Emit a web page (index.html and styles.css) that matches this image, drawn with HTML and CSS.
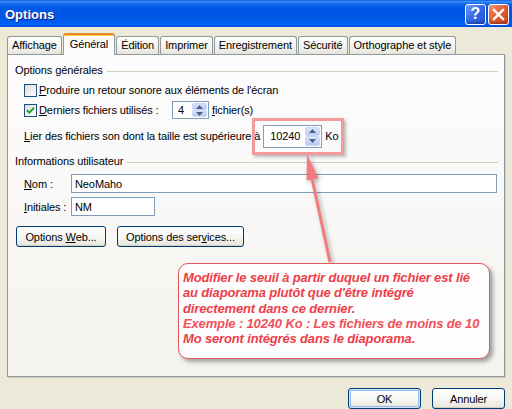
FILE: index.html
```html
<!DOCTYPE html>
<html lang="fr">
<head>
    <meta charset="UTF-8">
    <title>Options</title>
    <link rel="stylesheet" href="styles.css">
</head>
<body>
    <div class="window">
        <!-- Title bar -->
        <div class="titlebar">
            <span class="title">Options</span>
            <div class="caption-buttons">
                <span class="cap-btn help">?</span>
                <span class="cap-btn close">
                    <svg width="13" height="13" viewBox="0 0 13 13"><path d="M2 2 L11 11 M11 2 L2 11" stroke="#fff" stroke-width="2.4" stroke-linecap="square"/></svg>
                </span>
            </div>
        </div>

        <div class="client">
            <!-- Tabs -->
            <div class="tabs">
                <div class="tab">Affichage</div>
                <div class="tab active">Général</div>
                <div class="tab">Édition</div>
                <div class="tab">Imprimer</div>
                <div class="tab">Enregistrement</div>
                <div class="tab">Sécurité</div>
                <div class="tab">Orthographe et style</div>
            </div>

            <div class="panel">
                <div class="group-title"><span>Options générales</span><i class="rule"></i></div>
                <div class="group-body">
                    <div class="row row-sound">
                        <span class="checkbox"></span>
                        <span><u>P</u>roduire un retour sonore aux éléments de l'écran</span>
                    </div>
                    <div class="row row-recent">
                        <span class="checkbox">
                            <svg width="11" height="11" viewBox="0 0 11 11"><path d="M2 5.2 L4.3 7.6 L9 2.8" fill="none" stroke="#21A121" stroke-width="2"/></svg>
                        </span>
                        <span class="recent-label"><u>D</u>erniers fichiers utilisés :</span>
                        <span class="spin spin-small">
                            <span class="spin-value">4</span>
                            <span class="spin-buttons">
                                <span class="spin-up"><svg width="7" height="4" viewBox="0 0 7 4"><path d="M0 4 L3.5 0 L7 4Z" fill="#4D6185"/></svg></span>
                                <span class="spin-down"><svg width="7" height="4" viewBox="0 0 7 4"><path d="M0 0 L3.5 4 L7 0Z" fill="#4D6185"/></svg></span>
                            </span>
                        </span>
                        <span class="unit"><u>f</u>ichier(s)</span>
                    </div>
                    <div class="row row-link">
                        <span><u>L</u>ier des fichiers son dont la taille est supérieure à</span>
                        <span class="spin spin-large">
                            <span class="spin-value">10240</span>
                            <span class="spin-buttons">
                                <span class="spin-up"><svg width="7" height="4" viewBox="0 0 7 4"><path d="M0 4 L3.5 0 L7 4Z" fill="#4D6185"/></svg></span>
                                <span class="spin-down"><svg width="7" height="4" viewBox="0 0 7 4"><path d="M0 0 L3.5 4 L7 0Z" fill="#4D6185"/></svg></span>
                            </span>
                        </span>
                        <span class="unit">Ko</span>
                    </div>
                </div>

                <div class="group-title user-title"><span>Informations utilisateur</span><i class="rule"></i></div>
                <div class="group-body">
                    <div class="field-row field-name">
                        <label><u>N</u>om :</label>
                        <span class="textbox wide">NeoMaho</span>
                    </div>
                    <div class="field-row field-initials">
                        <label><u>I</u>nitiales :</label>
                        <span class="textbox short">NM</span>
                    </div>
                </div>

                <div class="panel-buttons">
                    <button class="btn btn-web">Options <u>W</u>eb...</button>
                    <button class="btn btn-services">Options des ser<u>v</u>ices...</button>
                </div>
            </div>

            <div class="footer">
                <button class="btn btn-footer default">OK</button>
                <button class="btn btn-footer">Annuler</button>
            </div>
        </div>

        <!-- Annotation overlay -->
        <div class="highlight"></div>
        <svg class="arrow" width="512" height="409" viewBox="0 0 512 409">
            <path d="M330 262 L311.5 176" stroke="#F47A7E" stroke-width="3" fill="none"/>
            <path d="M307 154 L318.3 178.2 L306.5 180.6Z" fill="#F47A7E"/>
        </svg>
        <div class="callout">
            <p>Modifier le seuil à partir duquel un fichier est lié</p>
            <p>au diaporama plutôt que d'être intégré</p>
            <p>directement dans ce dernier.</p>
            <p class="light">Exemple : 10240 Ko : Les fichiers de moins de 10</p>
            <p>Mo seront intégrés dans le diaporama.</p>
        </div>
    </div>
</body>
</html>
```

FILE: styles.css
```css
body {
    margin: 0;
    padding: 0;
    font-family: "Liberation Sans", Arial, sans-serif;
    font-size: 11px;
    color: #000;
}
.window {
    position: relative;
    width: 512px;
    height: 409px;
    background: #ECE9D8;
    overflow: hidden;
}

/* Title bar */
.titlebar {
    height: 27px;
    display: flex;
    align-items: center;
    justify-content: space-between;
    padding: 0 3px 0 5px;
    background: linear-gradient(to bottom, #0A5FE6 0%, #3D8CF6 6%, #1268EE 14%, #0058E6 30%, #0055E3 60%, #005EF2 84%, #0063F8 90%, #0048D8 100%);
}
.title {
    font-family: "Liberation Sans", Arial, sans-serif;
    font-weight: bold;
    font-size: 13px;
    color: #fff;
    text-shadow: 1px 1px 0 #0A1E8C;
    margin-top: 2px;
}
.caption-buttons {
    display: flex;
    gap: 2px;
    margin-top: 1px;
}
.cap-btn {
    width: 19px;
    height: 19px;
    border: 1px solid #fff;
    border-radius: 3px;
    display: flex;
    align-items: center;
    justify-content: center;
    color: #fff;
    box-shadow: inset 0 -2px 2px rgba(0, 0, 0, 0.25);
}
.help {
    background: linear-gradient(135deg, #6E9CF6 0%, #2E64E6 55%, #2456D8 100%);
    font-weight: bold;
    font-size: 16px;
}
.close {
    background: linear-gradient(135deg, #F29874 0%, #E25A30 50%, #CE4220 100%);
}

/* Client area */
.client {
    padding: 6px 7px 0 7px;
    letter-spacing: -0.1px;
}
.tabs {
    display: flex;
    align-items: flex-end;
    height: 21px;
}
.tab {
    height: 17px;
    line-height: 17px;
    padding: 0 4px;
    border: 1px solid #919B9C;
    border-bottom: none;
    border-radius: 3px 3px 0 0;
    background: linear-gradient(to bottom, #FEFEFE, #F0EFEA 70%, #E4E3DC);
    white-space: nowrap;
}
.tab + .tab {
    margin-left: 1px;
}
.tab.active {
    position: relative;
    z-index: 2;
    height: 19px;
    line-height: 19px;
    margin-bottom: -1px;
    padding: 0 6px 1px 6px;
    background: #FCFCFE;
    border-top: 2px solid #E68B2C;
    box-shadow: inset 0 1px 0 #FFC73C;
}

/* Panel */
.panel {
    height: 312px;
    border: 1px solid #919B9C;
    background: linear-gradient(to bottom, #FCFCFE, #F4F3EE);
    padding: 9px 6px 0 7px;
    box-shadow: 1px 1px 0 #D0CEC0;
}
.group-title {
    display: flex;
    align-items: center;
    height: 13px;
    line-height: 13px;
}
.group-title .rule {
    flex: 1;
    height: 0;
    border-top: 1px solid #D0D0BF;
    margin-left: 4px;
    margin-top: 1px;
}
.user-title {
    margin-top: 7px;
}
.group-body {
    padding-left: 9px;
}
.row {
    display: flex;
    align-items: center;
    height: 20px;
}
.row-sound {
    margin-top: 3px;
}
.row-link {
    height: 24px;
    margin-top: 4px;
}
.checkbox {
    width: 11px;
    height: 11px;
    border: 1px solid #1C5180;
    background: linear-gradient(135deg, #DCDCD7, #FFFFFF);
    margin-right: 2px;
    display: flex;
    align-items: center;
    justify-content: center;
}
.recent-label {
    width: 133px;
}
.unit {
    margin-left: 3px;
}

/* Spin boxes */
.spin {
    display: flex;
    align-items: stretch;
    border: 1px solid #7F9DB9;
    background: #fff;
    padding: 1px;
    box-sizing: border-box;
}
.spin-small {
    width: 37px;
    height: 18px;
}
.spin-large {
    width: 59px;
    height: 23px;
    margin-left: 3px;
}
.spin-value {
    flex: 1;
    display: flex;
    align-items: center;
    padding-left: 4px;
}
.spin-large .spin-value {
    padding-left: 5px;
}
.spin-buttons {
    width: 15px;
    display: flex;
    flex-direction: column;
}
.spin-up, .spin-down {
    flex: 1;
    display: flex;
    align-items: center;
    justify-content: center;
    background: linear-gradient(to bottom, #D7E2FA, #B8CAF5);
    border: 1px solid #C9D6F7;
    border-radius: 2px;
    box-sizing: border-box;
}

/* User fields */
.field-row {
    display: flex;
    align-items: center;
}
.field-name {
    margin-top: 6px;
}
.field-initials {
    margin-top: 4px;
}
.field-row label {
    width: 47px;
}
.textbox {
    height: 19px;
    box-sizing: border-box;
    border: 1px solid #7F9DB9;
    background: #fff;
    padding-left: 3px;
    display: flex;
    align-items: center;
}
.textbox.wide {
    width: 426px;
}
.textbox.short {
    width: 84px;
}

/* Buttons */
.btn {
    font-family: "Liberation Sans", Arial, sans-serif;
    font-size: 11px;
    letter-spacing: -0.1px;
    color: #000;
    height: 21px;
    border: 1px solid #003C74;
    border-radius: 3px;
    background: linear-gradient(to bottom, #FFFFFF, #F4F4F0 60%, #E6E4DA);
    box-shadow: inset 0 -1px 0 #D6D0C5;
    padding: 0;
}
.panel-buttons {
    display: flex;
    gap: 11px;
    margin-top: 10px;
    padding-left: 1px;
}
.btn-web {
    width: 90px;
}
.btn-services {
    width: 127px;
}
.footer {
    display: flex;
    justify-content: flex-end;
    gap: 11px;
    margin-top: 11px;
}
.btn-footer {
    width: 73px;
}
.btn.default {
    box-shadow: inset 0 0 0 1px #CEE7FF, inset 0 0 0 2px #98B8EA;
}

/* Annotation */
.highlight {
    position: absolute;
    left: 252px;
    top: 118px;
    width: 86px;
    height: 31px;
    border: 3px solid #F59A9C;
    box-shadow: 2px 2px 3px rgba(0, 0, 0, 0.25);
}
.arrow {
    position: absolute;
    left: 0;
    top: 0;
    filter: drop-shadow(2px 2px 2px rgba(0, 0, 0, 0.3));
}
.callout {
    position: absolute;
    left: 178px;
    top: 263px;
    width: 306px;
    height: 88px;
    border: 1.5px solid #E4555C;
    border-radius: 10px;
    background: #FDFDFD;
    box-shadow: 3px 3px 4px rgba(0, 0, 0, 0.35);
    padding: 6px 0 0 4px;
    font-family: "Liberation Sans", Arial, sans-serif;
    font-style: italic;
    font-weight: bold;
    font-size: 13px;
    line-height: 15.3px;
    letter-spacing: -0.15px;
    color: #EE3E4A;
}
.callout p {
    margin: 0;
    white-space: nowrap;
}
.callout .light {
    color: #F0505A;
}
```
